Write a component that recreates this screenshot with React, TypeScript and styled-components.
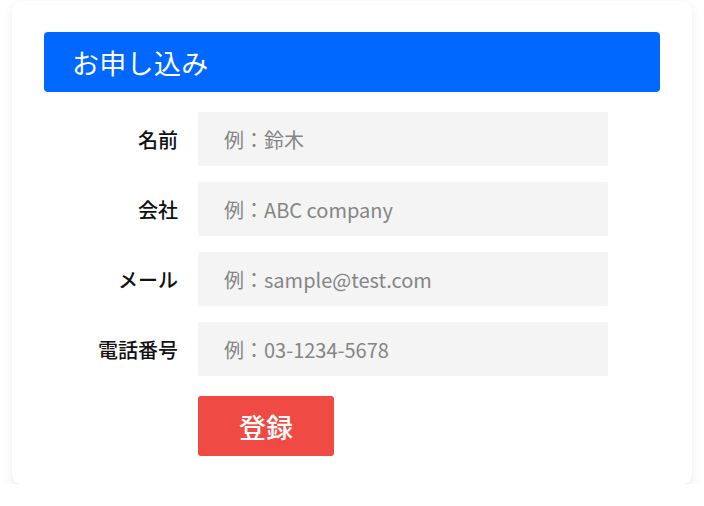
import styled, { createGlobalStyle } from "styled-components";

const GlobalStyle = createGlobalStyle`
  html, body {
    margin: 0;
    padding: 0;
    background: #fff;
  }
  body {
    font-family: "Noto Sans CJK JP", "Noto Sans", sans-serif;
  }
  * {
    box-sizing: border-box;
  }
`;

const Page = styled.div`
  padding: 1px 12px 0;
`;

const Card = styled.form`
  width: 680px;
  height: 483px;
  background: #fff;
  border-radius: 8px;
  box-shadow: 0 6px 12px rgba(0, 0, 0, 0.07), 0 0 1px rgba(0, 0, 0, 0.1);
  padding: 31px 32px 0;
`;

const Header = styled.h2`
  margin: 0 0 20px;
  height: 60px;
  background: #0068ff;
  border-radius: 4px;
  color: #fff;
  font-size: 27px;
  font-weight: 400;
  display: flex;
  align-items: center;
  padding-left: 28px;
  letter-spacing: 0.3px;
`;

const Fields = styled.div`
  display: flex;
  flex-direction: column;
  gap: 16px;
`;

const Row = styled.div`
  display: grid;
  grid-template-columns: 134px 410px;
  column-gap: 20px;
  align-items: center;
`;

const Label = styled.label`
  text-align: right;
  font-size: 20px;
  font-weight: 500;
  color: #111;
`;

const Input = styled.input`
  height: 54px;
  border: none;
  border-radius: 2px;
  background: #f4f4f4;
  padding: 0 26px;
  font-family: "Noto Sans CJK JP", "Noto Sans", sans-serif;
  font-size: 20px;
  color: #333;
  outline: none;

  &::placeholder {
    color: #858585;
  }
`;

const Actions = styled.div`
  margin-top: 20px;
  padding-left: 154px;
`;

const Submit = styled.button`
  width: 136px;
  height: 60px;
  border: none;
  border-radius: 3px;
  background: #ef4a43;
  color: #fff;
  font-family: "Noto Sans CJK JP", "Noto Sans", sans-serif;
  font-size: 27px;
  font-weight: 500;
  cursor: pointer;
`;

const fields = [
  { id: "name", label: "名前", placeholder: "例：鈴木" },
  { id: "company", label: "会社", placeholder: "例：ABC company" },
  { id: "mail", label: "メール", placeholder: "例：sample@test.com" },
  { id: "tel", label: "電話番号", placeholder: "例：03-1234-5678" },
];

const App = () => {
  return (
    <Page>
      <GlobalStyle />
      <Card onSubmit={(e) => e.preventDefault()}>
        <Header>お申し込み</Header>
        <Fields>
          {fields.map((f) => (
            <Row key={f.id}>
              <Label htmlFor={f.id}>{f.label}</Label>
              <Input id={f.id} placeholder={f.placeholder} />
            </Row>
          ))}
        </Fields>
        <Actions>
          <Submit type="submit">登録</Submit>
        </Actions>
      </Card>
    </Page>
  );
};

export default App;
